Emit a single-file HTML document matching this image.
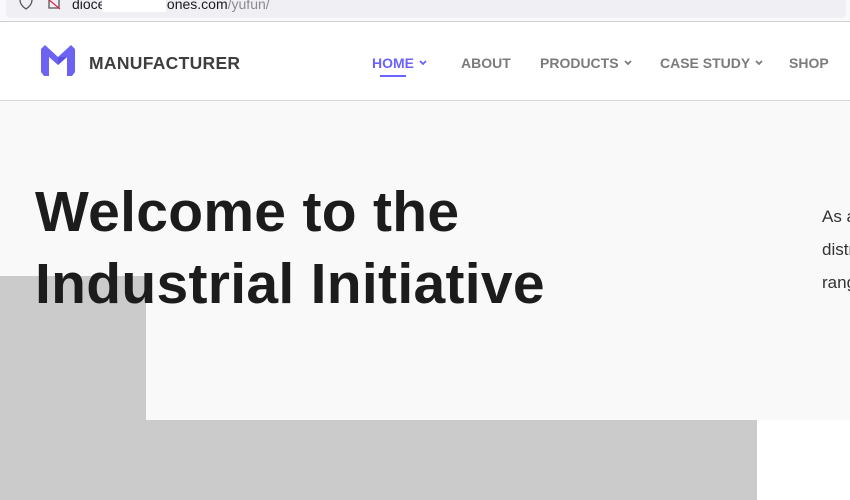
<!DOCTYPE html>
<html><head><meta charset="utf-8"><style>
*{margin:0;padding:0;box-sizing:border-box}
body{width:850px;height:500px;overflow:hidden;background:#fff;font-family:"Liberation Sans",sans-serif;position:relative}
.bar{position:absolute;left:0;top:0;width:850px;height:22px;background:#f9f9fb;border-bottom:1px solid #cfcfd4}
.url{position:absolute;left:6px;top:-8px;width:840px;height:26px;background:#f0f0f4;border-radius:4px}
.urltxt{position:absolute;left:72px;top:-4px;font-size:14px;color:#1b1b1f;white-space:nowrap}
.mask{position:absolute;left:102px;top:0;width:64px;height:12px;background:#fff}
.hdr{position:absolute;left:0;top:23px;width:850px;height:78px;background:#fff;border-bottom:1px solid #d8d8d8}
.brand{position:absolute;left:89px;top:53px;font-size:17.5px;font-weight:bold;color:#3e3e3e;letter-spacing:0.3px}
.nav{position:absolute;top:55px;font-size:14px;font-weight:bold;color:#7b7b7b;white-space:nowrap}
.nav svg{margin-left:5px;vertical-align:2px}
.hero{position:absolute;left:0;top:101px;width:850px;height:319px;background:#f9f9f9}
.g1{position:absolute;left:0;top:276px;width:146px;height:224px;background:#cbcbcb}
.g2{position:absolute;left:0;top:420px;width:757px;height:80px;background:#cbcbcb}
h1{position:absolute;left:35px;top:176px;font-size:57px;line-height:72px;font-weight:bold;color:#1c1c1c;white-space:nowrap;letter-spacing:0.3px}
.p{position:absolute;left:822px;top:200px;font-size:17px;line-height:33px;color:#333;white-space:nowrap}
</style></head><body>
<div class="bar"><div class="url"></div>
<svg style="position:absolute;left:18px;top:-4px" width="16" height="14"><path d="M2 0v4c0 4 3 7 6 9c3-2 6-5 6-9V0" fill="none" stroke="#555" stroke-width="1.3"/></svg>
<svg style="position:absolute;left:47px;top:-2px" width="14" height="12"><path d="M2 2v8h10V2" fill="none" stroke="#555" stroke-width="1.3"/><path d="M1 1l12 10" stroke="#e22850" stroke-width="1.3"/></svg>
<div class="urltxt">dioce&nbsp;&nbsp;&nbsp;&nbsp;&nbsp;&nbsp;&nbsp;&nbsp;&nbsp;&nbsp;&nbsp;&nbsp;&nbsp;&nbsp;&nbsp;lones.com<span style="color:#8a8a90">/yufun/</span></div>
<div class="mask"></div>
</div>
<div class="hdr"></div>
<svg style="position:absolute;left:41px;top:44px" width="34" height="33" viewBox="0 0 34 33">
<path d="M0 5L4 1L17 13L30 1L34 5V28L31 32H26V13L17 21L8 13V32H3L0 28Z" fill="#6c63f3"/>
<path d="M17 13L17 21L26 13Z" fill="#5a52e0"/>
</svg>
<div class="brand">MANUFACTURER</div>
<div class="nav" style="left:372px;color:#6c63ff">HOME<svg width="8" height="6"><path d="M1 1l3 3l3-3" fill="none" stroke="#6c63ff" stroke-width="1.8"/></svg></div>
<div style="position:absolute;left:380px;top:75px;width:26px;height:2px;background:#6c63ff"></div>
<div class="nav" style="left:461px">ABOUT</div>
<div class="nav" style="left:540px">PRODUCTS<svg width="8" height="6"><path d="M1 1l3 3l3-3" fill="none" stroke="#7b7b7b" stroke-width="1.8"/></svg></div>
<div class="nav" style="left:660px">CASE STUDY<svg width="8" height="6"><path d="M1 1l3 3l3-3" fill="none" stroke="#7b7b7b" stroke-width="1.8"/></svg></div>
<div class="nav" style="left:789px">SHOP</div>
<div class="hero"></div>
<div class="g1"></div><div class="g2"></div>
<h1>Welcome to the<br>Industrial Initiative</h1>
<div class="p">As a<br>distr<br>rang</div>
</body></html>
